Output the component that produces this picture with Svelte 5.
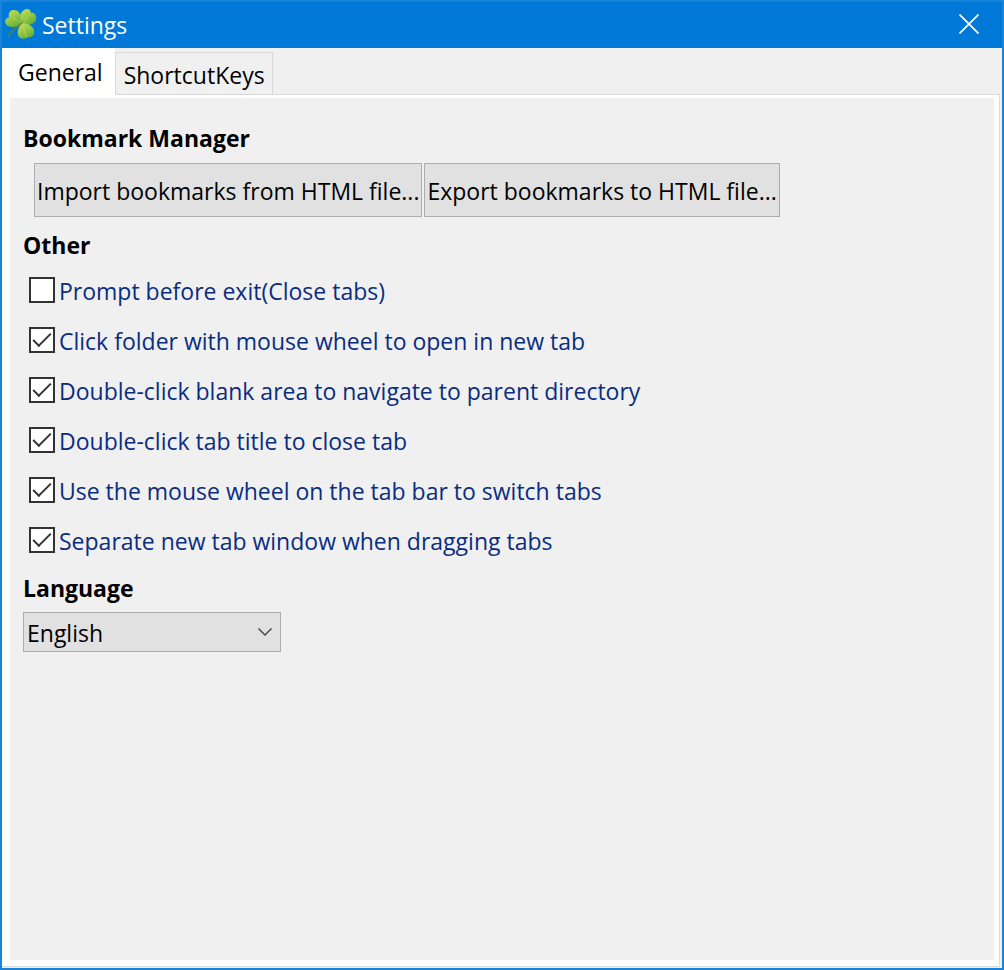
<script lang="ts">
    let activeTab = $state('general');
    let language = $state('English');

    let options = $state([
        { id: 'prompt-exit', label: 'Prompt before exit(Close tabs)', checked: false },
        { id: 'wheel-open', label: 'Click folder with mouse wheel to open in new tab', checked: true },
        { id: 'blank-parent', label: 'Double-click blank area to navigate to parent directory', checked: true },
        { id: 'title-close', label: 'Double-click tab title to close tab', checked: true },
        { id: 'wheel-switch', label: 'Use the mouse wheel on the tab bar to switch tabs', checked: true },
        { id: 'drag-separate', label: 'Separate new tab window when dragging tabs', checked: true }
    ]);
</script>

<div class="window">
    <header class="title-bar">
        <svg class="logo" viewBox="0 0 32 32" aria-hidden="true">
            <defs>
                <linearGradient id="leaf" x1="0" y1="0" x2="0.6" y2="1">
                    <stop offset="0" stop-color="#c9df62" />
                    <stop offset="0.5" stop-color="#9acb48" />
                    <stop offset="1" stop-color="#67ae35" />
                </linearGradient>
            </defs>
            <path d="M17 15C13 18 7 19 3 17C-1 15 -1 10 4 8C3 4 5 1 9 1C15 1 18 8 17 15Z" fill="url(#leaf)" />
            <path d="M17 15C14 10 15 3 19 1C22 -1 26 0 26 4C30 3 32 7 31 11C29 16 22 17 17 15Z" fill="url(#leaf)" />
            <path d="M17 14C22 14 28 17 29 21C30 26 27 29 23 28C20 31 14 30 13 26C12 22 14 17 17 14Z" fill="url(#leaf)" />
            <path d="M17 15L7 8M17 15L25 5M17 15L22 28" fill="none" stroke="#b5da5c" stroke-width="0.7" />
            <path d="M18 13C13 17 7 22 3 27" fill="none" stroke="#63852f" stroke-width="1.3" />
        </svg>
        <h1>Settings</h1>
        <button class="close" aria-label="Close">
            <svg viewBox="0 0 20 20" aria-hidden="true">
                <path d="M0.5 0.5L19.5 19.5M19.5 0.5L0.5 19.5" stroke="#fff" stroke-width="1.7" />
            </svg>
        </button>
    </header>

    <div class="client">
        <div class="tabs" role="tablist">
            <button
                role="tab"
                class:active={activeTab === 'general'}
                aria-selected={activeTab === 'general'}
                onclick={() => (activeTab = 'general')}>General</button>
            <button
                role="tab"
                class:active={activeTab === 'shortcuts'}
                aria-selected={activeTab === 'shortcuts'}
                onclick={() => (activeTab = 'shortcuts')}>ShortcutKeys</button>
        </div>

        <div class="frame">
            <main class="page" role="tabpanel">
                {#if activeTab === 'general'}
                    <h2>Bookmark Manager</h2>
                    <div class="actions">
                        <button>Import bookmarks from HTML file...</button>
                        <button>Export bookmarks to HTML file...</button>
                    </div>

                    <h2>Other</h2>
                    <div class="options">
                        {#each options as option (option.id)}
                            <div class="option">
                                <input type="checkbox" id={option.id} bind:checked={option.checked} />
                                <label for={option.id}>{option.label}</label>
                            </div>
                        {/each}
                    </div>

                    <h2><label for="language">Language</label></h2>
                    <div class="select">
                        <select id="language" bind:value={language}>
                            <option>English</option>
                        </select>
                        <svg viewBox="0 0 14 8" aria-hidden="true">
                            <path d="M0.5 0.5L7 7L13.5 0.5" fill="none" stroke="#404040" stroke-width="1.4" />
                        </svg>
                    </div>
                {/if}
            </main>
        </div>
    </div>
</div>

<style>
    :global(body) {
        background: #f0f0f0;
    }
    .window {
        box-sizing: border-box;
        min-height: 100vh;
        display: flex;
        flex-direction: column;
        border: 2px solid #1883d7;
        background: #f0f0f0;
        color: #000;
        font: 23px/32px "Segoe UI", "Open Sans", "Noto Sans", sans-serif;
    }
    button, select {
        font: inherit;
        color: inherit;
        border-radius: 0;
    }
    h1, h2 {
        margin: 0;
        font-size: inherit;
    }

    .title-bar {
        display: flex;
        align-items: center;
        gap: 5px;
        height: 46px;
        padding-left: 3px;
        background: #0078d7;
        color: #fff;
    }
    .title-bar h1 {
        font-weight: 400;
    }
    .logo {
        width: 32px;
        height: 32px;
    }
    .close {
        display: flex;
        align-items: center;
        justify-content: center;
        width: 66px;
        height: 44px;
        margin-left: auto;
        align-self: flex-start;
        padding: 0;
        border: none;
        background: none;
    }
    .close svg {
        width: 20px;
        height: 20px;
    }

    .client {
        flex: 1;
        display: flex;
        flex-direction: column;
        padding: 0 2px 1px 0;
    }
    .tabs {
        display: flex;
        align-items: flex-end;
        height: 47px;
        margin-bottom: -1px;
        z-index: 1;
    }
    .tabs button {
        height: 43px;
        padding: 2px 7px 0 8px;
        border: 1px solid #d9d9d9;
        background: #f0f0f0;
    }
    .tabs .active {
        height: 47px;
        padding: 0 11px 0 15px;
        border-color: #fff;
        background: #fff;
    }

    .frame {
        flex: 1;
        display: flex;
        padding: 3px 5px 6px 8px;
        border: 1px solid #dcdcdc;
        border-left: none;
        background: #fff;
    }
    .page {
        flex: 1;
        padding: 24px 13px;
        background: #f0f0f0;
    }

    .actions {
        display: flex;
        flex-wrap: wrap;
        gap: 2px;
        padding: 9px 11px 12px;
    }
    .actions button {
        height: 54px;
        padding: 2px 2px 0;
        border: 1px solid #adadad;
        background: #e1e1e1;
    }

    .options {
        padding: 4px 6px 7px;
    }
    .option {
        display: flex;
        align-items: center;
        gap: 4px;
        height: 50px;
        color: #0a2d80;
    }
    .option label {
        padding-top: 2px;
    }
    .option input {
        appearance: none;
        display: grid;
        place-items: center;
        width: 26px;
        height: 26px;
        margin: 0;
        border: 2px solid #333;
        background: #fff;
    }
    .option input:checked::before {
        content: "";
        width: 16px;
        height: 7px;
        margin-bottom: 5px;
        border: solid #333;
        border-width: 0 0 2px 2px;
        transform: rotate(-45deg);
    }

    .select {
        display: grid;
        align-items: center;
        width: 258px;
        margin-top: 8px;
    }
    .select select {
        grid-area: 1 / 1;
        appearance: none;
        width: 100%;
        height: 40px;
        padding: 2px 30px 0 3px;
        border: 1px solid #adadad;
        background: #e1e1e1;
    }
    .select svg {
        grid-area: 1 / 1;
        justify-self: end;
        width: 14px;
        height: 8px;
        margin-right: 9px;
        pointer-events: none;
    }
</style>
